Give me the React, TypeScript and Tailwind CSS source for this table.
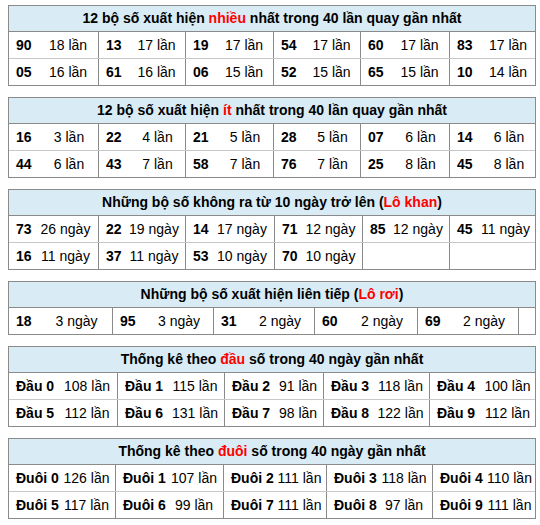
import React from "react";

type Cell = [string, string] | null;

function Table({
  title,
  gridCls,
  numCls,
  rows,
}: {
  title: React.ReactNode;
  gridCls: string;
  numCls: string;
  rows: Cell[][];
}) {
  return (
    <div className="w-[528px] border border-[#8a8a8a] bg-white">
      <div className="h-[26px] flex items-center justify-center bg-[#d9ecf6] border-b border-[#8a8a8a] font-bold text-[14px] text-black">
        {title}
      </div>
      {rows.map((row, ri) => (
        <div
          key={ri}
          className={
            "grid " +
            gridCls +
            (ri < rows.length - 1 ? " h-[27px] border-b border-[#c8c8c8]" : " h-[26px]")
          }
        >
          {row.map((c, ci) => (
            <div
              key={ci}
              className={
                "flex items-center h-full text-[14px] text-black" +
                (ci > 0 ? " border-l border-[#8a8a8a]" : "")
              }
            >
              {c ? (
                <>
                  <span className={"pl-[7px] font-bold whitespace-nowrap " + numCls}>{c[0]}</span>
                  <span className="flex-1 text-center whitespace-nowrap">{c[1]}</span>
                </>
              ) : null}
            </div>
          ))}
        </div>
      ))}
    </div>
  );
}

const red = "text-[#ff0000]";

export default function App() {
  return (
    <div className="w-[540px] h-[525px] bg-white pl-2 pt-[5px] flex flex-col gap-[11px] font-['Liberation_Sans',Arial,sans-serif]">
      <Table
        title={
          <span>
            12 bộ số xuất hiện <span className={red}>nhiều</span> nhất trong 40 lần quay gần nhất
          </span>
        }
        gridCls="grid-cols-[89px_87px_88px_87px_89px_88px]"
        numCls="w-[29px]"
        rows={[
          [["90", "18 lần"], ["13", "17 lần"], ["19", "17 lần"], ["54", "17 lần"], ["60", "17 lần"], ["83", "17 lần"]],
          [["05", "16 lần"], ["61", "16 lần"], ["06", "15 lần"], ["52", "15 lần"], ["65", "15 lần"], ["10", "14 lần"]],
        ]}
      />
      <Table
        title={
          <span>
            12 bộ số xuất hiện <span className={red}>ít</span> nhất trong 40 lần quay gần nhất
          </span>
        }
        gridCls="grid-cols-[89px_87px_88px_87px_89px_88px]"
        numCls="w-[31px]"
        rows={[
          [["16", "3 lần"], ["22", "4 lần"], ["21", "5 lần"], ["28", "5 lần"], ["07", "6 lần"], ["14", "6 lần"]],
          [["44", "6 lần"], ["43", "7 lần"], ["58", "7 lần"], ["76", "7 lần"], ["25", "8 lần"], ["45", "8 lần"]],
        ]}
      />
      <Table
        title={
          <span>
            Những bộ số không ra từ 10 ngày trở lên (<span className={red}>Lô khan</span>)
          </span>
        }
        gridCls="grid-cols-[89px_87px_89px_88px_87px_88px]"
        numCls="w-[24px]"
        rows={[
          [["73", "26 ngày"], ["22", "19 ngày"], ["14", "17 ngày"], ["71", "12 ngày"], ["85", "12 ngày"], ["45", "11 ngày"]],
          [["16", "11 ngày"], ["37", "11 ngày"], ["53", "10 ngày"], ["70", "10 ngày"], null, null],
        ]}
      />
      <Table
        title={
          <span>
            Những bộ số xuất hiện liên tiếp (<span className={red}>Lô rơi</span>)
          </span>
        }
        gridCls="grid-cols-[103px_101px_101px_103px_101px_19px]"
        numCls="w-[32px]"
        rows={[[["18", "3 ngày"], ["95", "3 ngày"], ["31", "2 ngày"], ["60", "2 ngày"], ["69", "2 ngày"], null]]}
      />
      <Table
        title={
          <span>
            Thống kê theo <span className={red}>đầu</span> số trong 40 ngày gần nhất
          </span>
        }
        gridCls="grid-cols-[108px_107px_99px_106px_108px]"
        numCls="w-[48px]"
        rows={[
          [["Đầu 0", "108 lần"], ["Đầu 1", "115 lần"], ["Đầu 2", "91 lần"], ["Đầu 3", "118 lần"], ["Đầu 4", "100 lần"]],
          [["Đầu 5", "112 lần"], ["Đầu 6", "131 lần"], ["Đầu 7", "98 lần"], ["Đầu 8", "122 lần"], ["Đầu 9", "112 lần"]],
        ]}
      />
      <Table
        title={
          <span>
            Thống kê theo <span className={red}>đuôi</span> số trong 40 ngày gần nhất
          </span>
        }
        gridCls="grid-cols-[106px_108px_103px_106px_105px]"
        numCls="w-[49px]"
        rows={[
          [["Đuôi 0", "126 lần"], ["Đuôi 1", "107 lần"], ["Đuôi 2", "111 lần"], ["Đuôi 3", "118 lần"], ["Đuôi 4", "110 lần"]],
          [["Đuôi 5", "117 lần"], ["Đuôi 6", "99 lần"], ["Đuôi 7", "111 lần"], ["Đuôi 8", "97 lần"], ["Đuôi 9", "111 lần"]],
        ]}
      />
    </div>
  );
}
